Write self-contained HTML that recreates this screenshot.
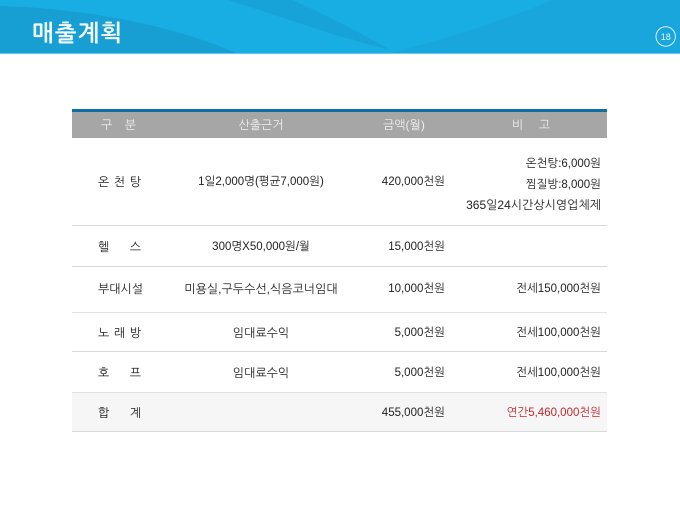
<!DOCTYPE html>
<html lang="ko">
<head>
<meta charset="utf-8">
<style>
html,body{margin:0;padding:0;background:#fff}
#p{position:relative;width:680px;height:510px;overflow:hidden;background:#fff;font-family:"Liberation Sans","NanumGothic","Noto Sans CJK KR",sans-serif;font-size:12px;color:#222}
#p>div{position:absolute}
.t{height:16px;line-height:16px;white-space:nowrap}
.j{text-align:justify;text-align-last:justify;left:98px;width:43px}
.c{left:161px;width:200px;text-align:center}
.a{right:235px;text-align:right;font-size:11.500px}
.r{right:79px;text-align:right;font-size:11.500px}
.n{font-size:11.500px}
.h{color:#eee}
.l{left:72px;width:535px;background:#d9d9d9}
</style>
</head>
<body>
<div id="p">
<svg style="position:absolute;left:0;top:0" width="680" height="54" viewBox="0 0 680 54">
<rect width="680" height="53" fill="#19aee3"/>
<path d="M0 6C80 8 170 24 236 53H0Z" fill="#179fd3"/>
<path d="M228 0H292C320 12 360 32 390 50C340 38 285 18 228 0Z" fill="#17a3d8"/>
<path d="M390 53C450 38 500 22 552 0H680V53Z" fill="#18a6dc"/>
<rect y="53" width="680" height="1" fill="#66c8ec"/>
<circle cx="665.700" cy="36.500" r="9.700" fill="none" stroke="#d8f0fa" stroke-width="1"/>
<text x="665.700" y="40" fill="#e8f7fc" font-family="Liberation Sans, sans-serif" font-size="9" text-anchor="middle">18</text>
</svg>
<div style="left:32px;top:19px;height:30px;line-height:30px;font-size:23px;font-weight:bold;color:#f2fbfe;letter-spacing:1.200px;font-family:'NanumGothic','Noto Sans CJK KR',sans-serif">매출계획</div>

<div style="left:72px;top:109px;width:535px;height:3px;background:#0f6fa4"></div>
<div style="left:72px;top:112px;width:535px;height:26px;background:#a6a6a6"></div>
<div style="left:72px;top:392px;width:535px;height:39px;background:#f6f6f6"></div>

<div class="l" style="top:225px;height:1px"></div>
<div class="l" style="top:266px;height:1px"></div>
<div class="l" style="top:312px;height:1px;background:#e2e2e2"></div>
<div class="l" style="top:351px;height:1px"></div>
<div class="l" style="top:392px;height:1px;background:#e0e0e0"></div>
<div class="l" style="top:431px;height:1px"></div>

<div class="t h j" style="top:117px;left:101px;width:35px">구 분</div>
<div class="t h c" style="top:117px">산출근거</div>
<div class="t h" style="top:117px;left:383px">금액(월)</div>
<div class="t h j" style="top:117px;left:512px;width:38px">비 고</div>

<div class="t j" style="top:174px">온 천 탕</div>
<div class="t c n" style="top:174px">1일2,000명(평균7,000원)</div>
<div class="t a" style="top:174px">420,000천원</div>
<div class="t r" style="top:156px">온천탕:6,000원</div>
<div class="t r" style="top:177px">찜질방:8,000원</div>
<div class="t r" style="top:197px;font-size:12px">365일24시간상시영업체제</div>

<div class="t j" style="top:239px">헬 스</div>
<div class="t c n" style="top:239px">300명X50,000원/월</div>
<div class="t a" style="top:239px">15,000천원</div>

<div class="t j" style="top:281px">부대시설</div>
<div class="t c" style="top:281px">미용실,구두수선,식음코너임대</div>
<div class="t a" style="top:281px">10,000천원</div>
<div class="t r" style="top:281px">전세150,000천원</div>

<div class="t j" style="top:325px">노 래 방</div>
<div class="t c" style="top:325px">임대료수익</div>
<div class="t a" style="top:325px">5,000천원</div>
<div class="t r" style="top:325px">전세100,000천원</div>

<div class="t j" style="top:365px">호 프</div>
<div class="t c" style="top:365px">임대료수익</div>
<div class="t a" style="top:365px">5,000천원</div>
<div class="t r" style="top:365px">전세100,000천원</div>

<div class="t j" style="top:405px">합 계</div>
<div class="t a" style="top:405px">455,000천원</div>
<div class="t r" style="top:405px;color:#c0272d">연간5,460,000천원</div>
</div>
</body>
</html>
